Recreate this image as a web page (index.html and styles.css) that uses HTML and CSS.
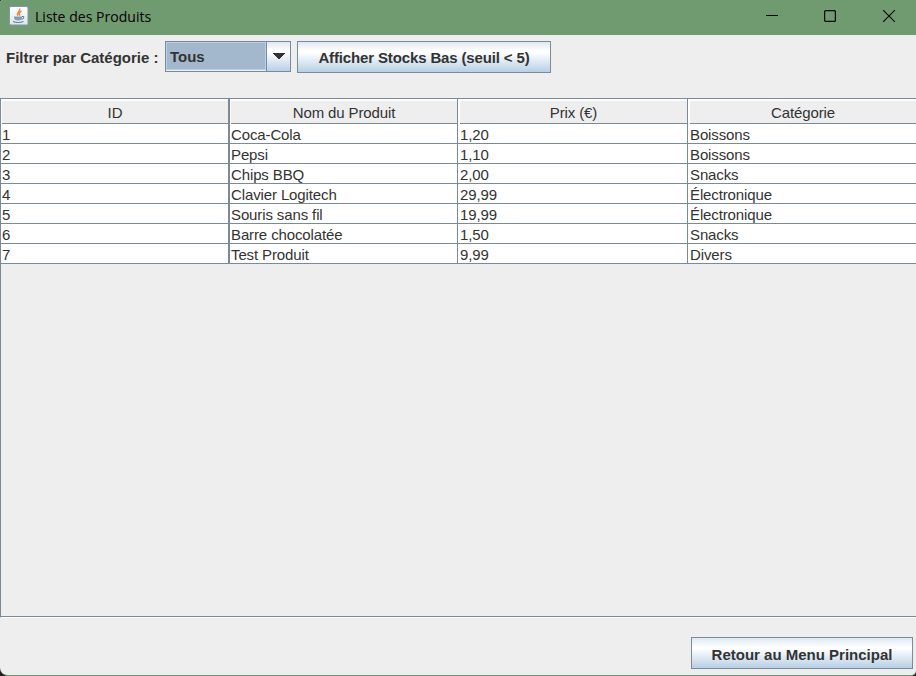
FILE: index.html
```html
<!DOCTYPE html>
<html lang="fr">
<head>
<meta charset="utf-8">
<title>Liste des Produits</title>
<link rel="stylesheet" href="styles.css">
</head>
<body>
<div class="window">
  <header class="titlebar">
    <svg class="app-icon" width="20" height="20" viewBox="0 0 20 20">
      <defs><linearGradient id="tile" x1="0" y1="0" x2="0" y2="1"><stop offset="0" stop-color="#fff"/><stop offset="1" stop-color="#dfe5ea"/></linearGradient></defs>
      <rect x=".5" y=".5" width="18.5" height="18.5" rx="1.5" fill="url(#tile)" stroke="#8397a8"/>
      <path d="M10.5 2.5C12 5 7 6 8.800 9.800M12.500 5C9.500 6.500 10 7.500 10.800 9.800" fill="none" stroke="#e58a3c" stroke-width="1.400"/>
      <path d="M5 10.500h8v1.500q-.5 2.500-4 2.500t-4-2.500z" fill="#7f9fb5"/>
      <path d="M13 10.500q2.500-.3 1.500 1.500-.7 1-2 1.200M4 15.500q5 2 10.500 0" fill="none" stroke="#557d99" stroke-width="1.100"/>
    </svg>
    <h1 class="title">Liste des Produits</h1>
    <div class="controls">
      <svg width="12" height="12" viewBox="0 0 12 12"><path d="M0 5.500h12" stroke="#000"/></svg>
      <svg width="12" height="12" viewBox="0 0 12 12"><rect x=".6" y=".6" width="10.800" height="10.800" rx="1" fill="none" stroke="#000" stroke-width="1.200"/></svg>
      <svg width="12" height="12" viewBox="0 0 12 12"><path d="M0 0L12 12M12 0L0 12" stroke="#000" stroke-width="1.100"/></svg>
    </div>
  </header>
  <div class="toolbar">
    <span class="label">Filtrer par Catégorie :</span>
    <div class="combo">
      <span class="combo-value">Tous</span>
      <span class="combo-arrow"><svg width="13" height="6" viewBox="0 0 13 6" shape-rendering="crispEdges"><path d="M0 0H13L7 6H6Z" fill="#333"/></svg></span>
    </div>
    <button class="button filter">Afficher Stocks Bas (seuil &lt; 5)</button>
  </div>
  <main class="scroll">
    <div class="row head"><div><span>ID</span></div><div><span>Nom du Produit</span></div><div><span>Prix (€)</span></div><div><span>Catégorie</span></div></div>
    <div class="row"><div>1</div><div>Coca-Cola</div><div>1,20</div><div>Boissons</div></div>
    <div class="row"><div>2</div><div>Pepsi</div><div>1,10</div><div>Boissons</div></div>
    <div class="row"><div>3</div><div>Chips BBQ</div><div>2,00</div><div>Snacks</div></div>
    <div class="row"><div>4</div><div>Clavier Logitech</div><div>29,99</div><div>Électronique</div></div>
    <div class="row"><div>5</div><div>Souris sans fil</div><div>19,99</div><div>Électronique</div></div>
    <div class="row"><div>6</div><div>Barre chocolatée</div><div>1,50</div><div>Snacks</div></div>
    <div class="row"><div>7</div><div>Test Produit</div><div>9,99</div><div>Divers</div></div>
  </main>
  <footer class="footer"><button class="button back">Retour au Menu Principal</button></footer>
</div>
</body>
</html>
```
FILE: styles.css
```css
* { box-sizing: border-box; }
body { margin: 0; background: #1c1f1c; overflow: hidden; }
.window {
  width: 916px; height: 676px;
  display: flex; flex-direction: column;
  background: #eee;
  border-bottom: 1px solid #769377;
  border-radius: 3px 0 5px 8px;
  overflow: hidden;
  font: 15px "Liberation Sans", Arial, sans-serif;
  color: #333;
}
.titlebar {
  flex: none; height: 35px;
  display: flex; align-items: center;
  padding: 0 21px 3px 9px;
  background: #709a70; color: #000;
}
.title { margin: 0 0 0 6px; font: 14px/20px "Open Sans", "Noto Sans", sans-serif; letter-spacing: .03px; padding-top: 2px; }
.controls { margin-left: auto; display: flex; gap: 46px; }
.controls svg:last-child { margin-left: 1px; }
.toolbar { flex: none; height: 63px; padding: 6px 0 0 6px; display: flex; align-items: flex-start; }
.label { width: 159px; line-height: 33px; font-weight: bold; white-space: nowrap; }
.combo { width: 126px; height: 31px; border: 1px solid #7a8a99; display: flex; font-weight: bold; margin-right: 6px; }
.combo-value {
  flex: 1; height: 28px; padding-left: 3px; line-height: 27px;
  border: 1px solid #b8cfe5; background: #a3b8cc;
}
.combo-arrow {
  width: 24px; border-left: 1px solid #7a8a99;
  padding: 11px 0 0 5px; line-height: 0;
  background: linear-gradient(#dde8f3, #fff 30%, #fff 35%, #b8cfe5);
}
.button {
  height: 32px; padding: 1px 0 0; border: 1px solid #7a8a99; border-radius: 0;
  background: linear-gradient(#dde8f3, #fff 30%, #fff 35%, #b8cfe5);
  font: bold 15px "Liberation Sans", Arial, sans-serif; color: #333;
  white-space: nowrap;
}
.filter { width: 254px; letter-spacing: -.14px; }
.back { width: 222px; padding-top: 3px; }
.scroll {
  flex: none; height: 520px;
  border-top: 1px solid #7a8a99; border-left: 1px solid #7a8a99;
  border-bottom: 1px solid #fff;
  box-shadow: inset 0 -1px #7a8a99;
  letter-spacing: -.12px;
}
.row { display: grid; grid-template-columns: 229px 228px 230px 228px; grid-template-rows: 100%; height: 20px; line-height: 21px; background: #fff; }
.row > div { padding-left: 2px; border-right: 1px solid #7a8a99; border-bottom: 1px solid #7a8a99; white-space: nowrap; }
.row > div:first-child { border-right-width: 2px; padding-left: 1px; }
.row > div:nth-child(2) { padding-left: 1px; }
.row > div:last-child { border-right: 0; }
.head { height: 25px; line-height: 24px; text-align: center; }
.head > div, .head > div:nth-child(n) { border-bottom: 0; padding: 2px 0 0 2px; }
.head > div:nth-child(-n+2) { padding-left: 1px; }
.head span { display: block; height: 23px; background: #eee; border-bottom: 1px solid #7a8a99; }
.footer { flex: 1; display: flex; justify-content: flex-end; padding: 19px 3px 0 0; }
```
